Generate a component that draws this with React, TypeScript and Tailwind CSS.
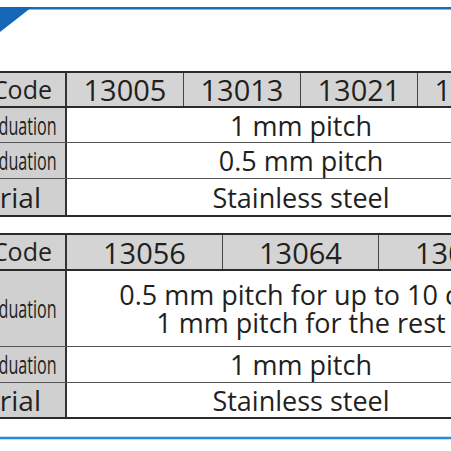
import React from "react";

const font = { fontFamily: '"Open Sans", "Noto Sans", sans-serif' };

function Label({ children, kind, className = "" }: { children: React.ReactNode; kind: "code" | "grad" | "mat"; className?: string }) {
  if (kind === "code")
    return (
      <div className={`w-[141px] shrink-0 border-r-2 border-[#333] bg-[#d2d2d2] flex items-center justify-end pr-[13px] text-[25px] ${className}`}>
        <span>{children}</span>
      </div>
    );
  if (kind === "grad")
    return (
      <div className={`w-[141px] shrink-0 border-r-2 border-[#333] bg-[#d0d0d0] flex items-center justify-end pr-[8px] text-[26px] ${className}`}>
        <span className="inline-block scale-x-[0.62] origin-right whitespace-nowrap">{children}</span>
      </div>
    );
  return (
    <div className={`w-[141px] shrink-0 border-r-2 border-[#333] bg-[#d0d0d0] flex items-center justify-end pr-[24px] text-[28px] ${className}`}>
      <span>{children}</span>
    </div>
  );
}

function HeadCell({ children, w }: { children?: React.ReactNode; w: string }) {
  return (
    <div className={`${w} shrink-0 border-r-[1.5px] border-[#444] bg-[#d4d4d4] flex items-center justify-center text-[29px] leading-none`}>
      {children}
    </div>
  );
}

export default function App() {
  return (
    <div className="w-[451px] h-[451px] overflow-hidden bg-white text-[#231f20]" style={font}>
      <svg width="451" height="34" className="block">
        <rect x="0" y="7" width="451" height="2.5" fill="#1d6db5" />
        <polygon points="0,7 32,7 0,32" fill="#1667b8" />
      </svg>
      <div className="h-[37px]" />

      {/* Table 1 */}
      <div className="ml-[-74px] w-[650px] flex flex-col border-t-2 border-b-2 border-[#2a2a2a]">
        <div className="flex h-[35px] border-b-2 border-[#2a2a2a]">
          <Label kind="code">Code</Label>
          <HeadCell w="w-[117px]">13005</HeadCell>
          <HeadCell w="w-[117px]">13013</HeadCell>
          <HeadCell w="w-[117px]">13021</HeadCell>
          <HeadCell w="w-[117px]">13039</HeadCell>
        </div>
        <div className="flex h-[35px] border-b-[1.5px] border-[#555]">
          <Label kind="grad">Graduation</Label>
          <div className="w-[468px] flex items-center justify-center text-[27px] leading-none">1 mm pitch</div>
        </div>
        <div className="flex h-[36px] border-b-[1.5px] border-[#555]">
          <Label kind="grad">Graduation</Label>
          <div className="w-[468px] flex items-center justify-center text-[27px] leading-none">0.5 mm pitch</div>
        </div>
        <div className="flex h-[36px]">
          <Label kind="mat">Material</Label>
          <div className="w-[468px] flex items-center justify-center text-[27px] leading-none">Stainless steel</div>
        </div>
      </div>

      <div className="h-[16px]" />

      {/* Table 2 */}
      <div className="ml-[-74px] w-[650px] flex flex-col border-t-2 border-b-2 border-[#2a2a2a]">
        <div className="flex h-[36px] border-b-2 border-[#2a2a2a]">
          <Label kind="code">Code</Label>
          <HeadCell w="w-[156px]">13056</HeadCell>
          <HeadCell w="w-[156px]">13064</HeadCell>
          <HeadCell w="w-[156px]">13072</HeadCell>
        </div>
        <div className="flex h-[76px] border-b-[1.5px] border-[#555]">
          <Label kind="grad">Graduation</Label>
          <div className="w-[468px] flex flex-col items-center justify-center text-[27px] leading-[28px] whitespace-nowrap">
            <span>0.5 mm pitch for up to 10 cm</span>
            <span>1 mm pitch for the rest</span>
          </div>
        </div>
        <div className="flex h-[36px] border-b-[1.5px] border-[#555]">
          <Label kind="grad">Graduation</Label>
          <div className="w-[468px] flex items-center justify-center text-[27px] leading-none">1 mm pitch</div>
        </div>
        <div className="flex h-[34px]">
          <Label kind="mat">Material</Label>
          <div className="w-[468px] flex items-center justify-center text-[27px] leading-none">Stainless steel</div>
        </div>
      </div>

      <div className="h-[17px]" />
      <div className="h-[1px] bg-[#bfe0f5]" />
      <div className="h-[2px] bg-[#2a8bd3]" />
      <div className="h-[1px] bg-[#bfe0f5]" />
    </div>
  );
}
